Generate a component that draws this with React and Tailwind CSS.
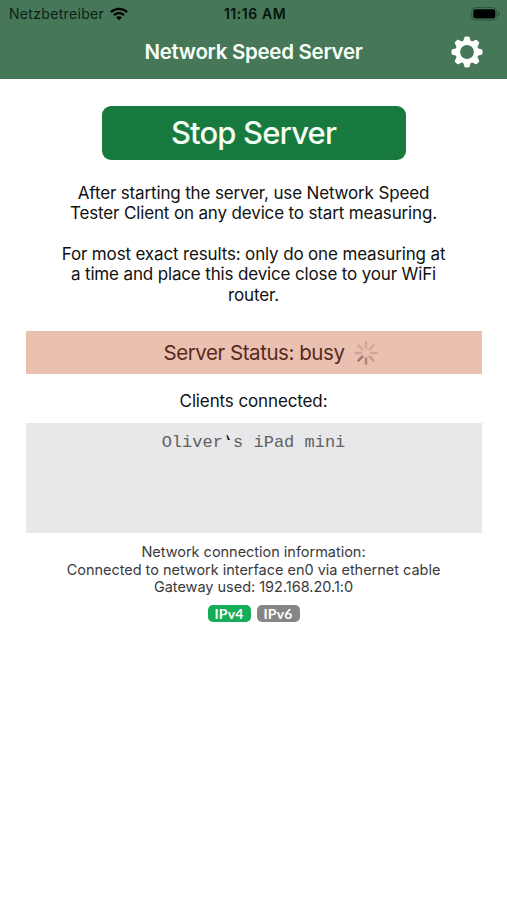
const GEAR_ANGLES = [0, 45, 90, 135, 180, 225, 270, 315];

// opacity per spoke, clockwise from the top
const SPOKES = [0.15, 0.15, 0.18, 0.22, 0.38, 0.46, 0.18, 0.15];

function WifiIcon() {
  return (
    <svg viewBox="0 0 18 14" className="ml-[6px] h-[14px] w-[18px]" fill="none" stroke="#000">
      <path d="M0.9 5.2 C5.4 0.7 12.6 0.7 17.1 5.2" strokeWidth="2.4" />
      <path d="M3.9 8.2 C6.8 5.4 11.2 5.4 14.1 8.2" strokeWidth="2.2" />
      <path d="M9 13.2 L6.2 10.4 C7.8 8.9 10.2 8.9 11.8 10.4 Z" fill="#000" stroke="none" />
    </svg>
  );
}

function BatteryIcon() {
  return (
    <svg viewBox="0 0 30 14" className="h-[14px] w-[30px]">
      <rect x="0.6" y="0.6" width="25" height="12.6" rx="3.8" fill="none" stroke="#2f5540" strokeWidth="1" />
      <rect x="2.3" y="2.3" width="22" height="9.2" rx="2.2" fill="#000" />
      <path d="M27 4.6 C29.6 5.6 29.6 8.4 27 9.4 Z" fill="#2f5540" />
    </svg>
  );
}

function GearIcon() {
  return (
    <svg viewBox="-16 -16 32 32" className="h-8 w-8">
      <circle r="9.3" fill="none" stroke="#fff" strokeWidth="4.8" />
      {GEAR_ANGLES.map((a) => (
        <path
          key={a}
          d="M-3.8 -10.6 L-2.7 -14.3 Q-2.3 -15.5 -1.2 -15.5 L1.2 -15.5 Q2.3 -15.5 2.7 -14.3 L3.8 -10.6 Z"
          fill="#fff"
          transform={`rotate(${a})`}
        />
      ))}
    </svg>
  );
}

function Spinner() {
  return (
    <svg viewBox="-12 -12 24 24" className="h-6 w-6">
      {SPOKES.map((opacity, i) => (
        <line
          key={i}
          y1="-5.2"
          y2="-10.6"
          stroke="#4a2a20"
          strokeWidth="2.6"
          strokeLinecap="round"
          opacity={opacity}
          transform={`rotate(${i * 45})`}
        />
      ))}
    </svg>
  );
}

export default function App() {
  return (
    <div className="flex h-[900px] w-[507px] flex-col overflow-hidden bg-white font-['Inter',sans-serif] text-black">
      <header className="h-[79px] shrink-0 bg-[#457758]">
        <div className="grid h-[27px] grid-cols-3 items-center pr-[6px] pl-[9px] text-[14px] leading-[27px]">
          <div className="flex items-center">
            <span className="tracking-[0.32px] text-[#0c1f14]">Netzbetreiber</span>
            <WifiIcon />
          </div>
          <div className="text-center text-[14px] font-semibold tracking-[0.55px] text-[#06140b]">
            11:16 AM
          </div>
          <div className="flex justify-end">
            <BatteryIcon />
          </div>
        </div>
        <div className="grid h-[50px] grid-cols-[1fr_auto_1fr] items-center">
          <span />
          <h1 className="pt-px text-[20.5px] font-semibold tracking-[-0.3px] text-[#f8fff8]">
            Network Speed Server
          </h1>
          <button className="mr-6 justify-self-end">
            <GearIcon />
          </button>
        </div>
      </header>

      <main className="flex flex-col items-center text-center">
        <button className="mt-[27px] h-[54px] w-[304px] rounded-[9px] bg-[#187a3e] text-[31px] leading-[54px] font-medium tracking-[-0.85px] text-[#f4fff6]">
          Stop Server
        </button>

        <div className="mt-[22.6px] flex flex-col items-center text-[17px] leading-[20.4px] tracking-[-0.15px] whitespace-nowrap text-[#111]">
          <p>After starting the server, use Network Speed</p>
          <p>Tester Client on any device to start measuring.</p>
          <p className="mt-[20.4px]">For most exact results: only do one measuring at</p>
          <p>a time and place this device close to your WiFi</p>
          <p>router.</p>
        </div>

        <div className="mt-[26px] flex h-[43px] w-[456px] items-center bg-[#eac1b1] pl-[138px]">
          <span className="pt-px text-[20.5px] tracking-[-0.45px] whitespace-nowrap text-[#572a1c]">
            Server Status: busy
          </span>
          <span className="ml-[10px]">
            <Spinner />
          </span>
        </div>

        <h2 className="mt-[16px] pt-px text-[17px] leading-[21px] tracking-[-0.12px] text-[#111]">
          Clients connected:
        </h2>

        <div className="mt-[11px] h-[110px] w-[456px] bg-[#e8e8ea] pt-[10px] font-['Liberation_Mono',monospace] text-[17px] leading-[20px] text-[#606062]">
          Oliver<span className="inline-block -scale-x-100 text-[#111]">‘</span>s iPad mini
        </div>

        <div className="mt-[10px] flex flex-col items-center text-[14.5px] leading-[17.5px] tracking-[-0.02px] whitespace-nowrap text-[#3a3a3c]">
          <p>Network connection information:</p>
          <p>Connected to network interface en0 via ethernet cable</p>
          <p>Gateway used: 192.168.20.1:0</p>
        </div>

        <div className="mt-[9px] flex gap-[6px] font-['Lato',sans-serif] text-[14px] leading-[17px] font-bold tracking-[0.2px] text-white">
          <span className="h-[17.5px] w-[43px] rounded-[5px] bg-[#15ad57]">IPv4</span>
          <span className="h-[17.5px] w-[43px] rounded-[5px] bg-[#868686]">IPv6</span>
        </div>
      </main>
    </div>
  );
}
